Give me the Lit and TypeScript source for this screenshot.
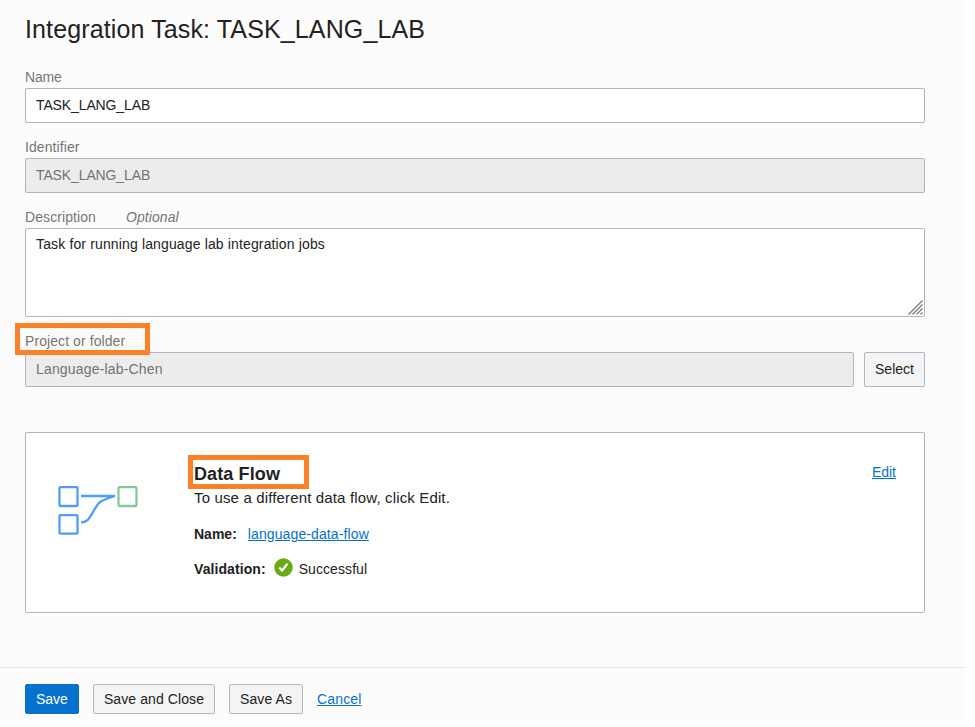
import { LitElement, html, css, svg } from "lit";
import { customElement } from "lit/decorators.js";

const flowIcon = svg`
  <g fill="none" stroke-width="2.3">
    <g stroke="#4f9dfb">
      <rect x="1.5" y="2.1" width="18" height="18.9" rx="1"></rect>
      <rect x="1.5" y="30.1" width="18" height="18.6" rx="1"></rect>
      <path d="M23 11 H57 C40 16 40.5 18 36.5 24.5 C31.5 33 30 37.3 23 37.3"></path>
    </g>
    <rect x="60.5" y="2.1" width="18" height="18.9" rx="1" stroke="#86c9a0"></rect>
  </g>`;

@customElement("app-root")
export class AppRoot extends LitElement {
  static styles = css`
    :host { display: block; height: 727px; overflow: hidden; background: #fff; }
    * { box-sizing: border-box; }
    .panel {
      width: 964px; height: 721px; background: #fcfcfc; color: #222;
      font: 14px/20px "Liberation Sans", Arial, sans-serif;
      display: flex; flex-direction: column;
    }
    .content { padding: 0 39px 0 25px; height: 667px; }
    h1 { margin: 0; padding-top: 14px; height: 67px; font-size: 25px; line-height: 30px; font-weight: 400; white-space: nowrap; letter-spacing: 0.13px; }
    .label { display: flex; gap: 30px; height: 21px; color: #767676; position: relative; letter-spacing: 0.08px; }
    .name-label { letter-spacing: -0.2px; }
    .field { margin-bottom: 14px; }
    .box {
      border: 1px solid #b0b6c0; border-radius: 2px; background: #fff;
      height: 35px; padding: 0 10px; line-height: 32px;
    }
    .caps { letter-spacing: -0.12px; }
    .folder { letter-spacing: 0.17px; }
    .readonly { background: #ececec; color: #737373; }
    .area { height: 89px; padding-top: 5px; line-height: 20px; display: flex; justify-content: space-between; padding-right: 1px; letter-spacing: 0.14px; }
    .grip { align-self: flex-end; display: block; margin-bottom: 1px; }
    .row { display: flex; gap: 10px; }
    .row .box { flex: 1; }
    .btn {
      height: 30px; padding: 0 10px; border: 1px solid #b0b6c0; border-radius: 2px;
      background: #f4f4f4; color: #222; font: inherit; line-height: 28px; white-space: nowrap;
      letter-spacing: 0.09px;
    }
    .row .btn { height: 35px; width: 61px; padding: 0 0 2px; letter-spacing: 0; }
    .primary { background: #0572ce; border-color: #0572ce; color: #fff; letter-spacing: 0; }
    .mark { position: absolute; border: 5px solid #fd8126; pointer-events: none; }
    .mark-project { left: -10px; top: -8px; width: 135px; height: 32px; }
    .mark-flow { left: -6px; top: -7px; width: 121px; height: 34px; }
    .card {
      margin-top: 45px; height: 181px; border: 1px solid #b0b6c0; border-radius: 2px;
      background: #fff; display: flex; padding: 29px 28px 0 32px;
    }
    .flow { display: block; margin-top: 23px; }
    .info { margin-left: 56px; flex: 1; }
    h2 { position: relative; margin: 0; font-size: 18px; line-height: 24px; letter-spacing: 0.11px; }
    .line { display: flex; height: 20px; align-items: center; }
    .hint { font-size: 15px; letter-spacing: 0.15px; padding-top: 3px; }
    .name { margin-top: 18px; gap: 11px; }
    .name a { letter-spacing: 0.11px; }
    .valid { margin-top: 15px; gap: 6px; letter-spacing: 0.08px; }
    .valid b { margin-right: 2px; }
    .ok { display: block; margin-top: -3px; }
    a { color: #0572ce; text-decoration: underline; }
    .footer { flex: 1; border-top: 1px solid #e3e3e3; padding: 16px 25px 0; display: flex; gap: 14px; align-items: flex-start; }
    .footer a { line-height: 30px; letter-spacing: 0.14px; }
  `;

  render() {
    return html`
      <div class="panel">
        <div class="content">
          <h1>Integration Task: TASK_LANG_LAB</h1>
          <div class="field">
            <div class="label name-label">Name</div>
            <div class="box caps">TASK_LANG_LAB</div>
          </div>
          <div class="field">
            <div class="label">Identifier</div>
            <div class="box readonly caps">TASK_LANG_LAB</div>
          </div>
          <div class="field">
            <div class="label"><span>Description</span><i>Optional</i></div>
            <div class="box area">
              <span>Task for running language lab integration jobs</span>
              <svg class="grip" width="15" height="15" viewBox="0 0 15 15" fill="none" stroke="#777" stroke-width="1.3">
                <path d="M0.5 14.5 L14.5 0.5 M4.5 14.5 L14.5 4.5 M8.5 14.5 L14.5 8.5 M12.5 14.5 L14.5 12.5"></path>
              </svg>
            </div>
          </div>
          <div class="label"><span>Project or folder</span><div class="mark mark-project"></div></div>
          <div class="row">
            <div class="box readonly folder">Language-lab-Chen</div>
            <button class="btn">Select</button>
          </div>
          <div class="card">
            <svg class="flow" width="80" height="51" viewBox="0 0 80 51">${flowIcon}</svg>
            <div class="info">
              <h2>Data Flow<div class="mark mark-flow"></div></h2>
              <div class="line hint">To use a different data flow, click Edit.</div>
              <div class="line name"><b>Name:</b><a>language-data-flow</a></div>
              <div class="line valid">
                <b>Validation:</b>
                <svg class="ok" width="19" height="19" viewBox="0 0 19 19">
                  <circle cx="9.5" cy="9.5" r="9.3" fill="#68ac15"></circle>
                  <path d="M5.2 9.5 L8 12.5 L13.5 5.7" fill="none" stroke="#fff" stroke-width="2.2"></path>
                </svg>
                <span>Successful</span>
              </div>
            </div>
            <a>Edit</a>
          </div>
        </div>
        <div class="footer">
          <button class="btn primary">Save</button>
          <button class="btn">Save and Close</button>
          <button class="btn">Save As</button>
          <a>Cancel</a>
        </div>
      </div>`;
  }
}
